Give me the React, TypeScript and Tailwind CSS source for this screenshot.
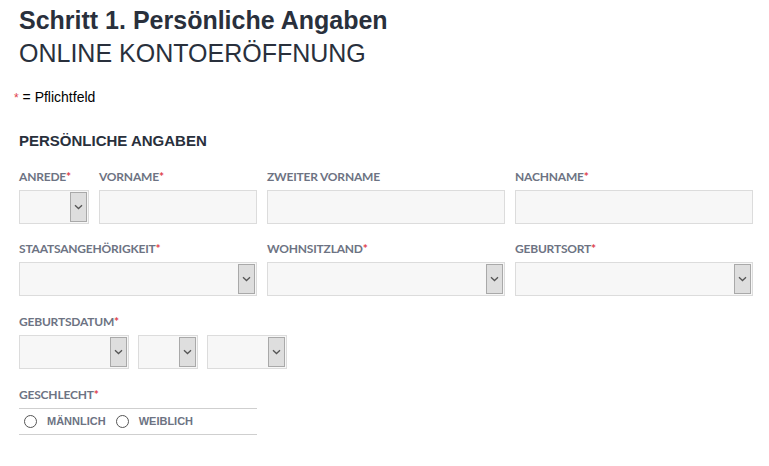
import React from "react";

const Chevron = () => (
  <svg width="9" height="6" viewBox="0 0 9 6" fill="none">
    <path d="M1 1.2 L4.5 4.5 L8 1.2" stroke="#555" strokeWidth="1.3" />
  </svg>
);

const Label = ({ text, req }: { text: string; req?: boolean }) => (
  <div className="h-[14px] text-[12px] leading-[14px] font-bold text-[#6d7383] tracking-[-0.2px] mb-[6px]" style={{ fontFamily: "Lato, sans-serif" }}>
    {text}
    {req && <span className="text-[#e0404a]">*</span>}
  </div>
);

const Input = ({ w }: { w: string }) => (
  <div className={`${w} h-[34px] bg-[#f7f7f7] border border-[#dcdcdc]`} />
);

const Select = ({ w }: { w: string }) => (
  <div className={`${w} h-[34px] bg-[#f7f7f7] border border-[#dcdcdc] flex justify-end p-px`}>
    <div className="w-[17px] h-full bg-[#dedede] border border-[#a9a9a9] flex items-center justify-center">
      <Chevron />
    </div>
  </div>
);

const Radio = ({ label }: { label: string }) => (
  <div className="flex items-center gap-[10px]">
    <div className="w-[13px] h-[13px] rounded-full border border-[#555] bg-white" />
    <span className="text-[11px] font-bold text-[#6d7383]">{label}</span>
  </div>
);

export default function App() {
  return (
    <div className="w-[769px] h-[466px] bg-white overflow-hidden" style={{ fontFamily: "'Liberation Sans', Arial, sans-serif" }}>
      <div className="pl-[19px] pt-[6px]">
        <h1 className="text-[25px] leading-[29px] font-bold text-[#29303c]">Schritt 1. Persönliche Angaben</h1>
        <h2 className="text-[25px] leading-[29px] text-[#29303c] mt-[4px]">ONLINE KONTOERÖFFNUNG</h2>
      </div>
      <div className="pl-[14px] mt-[21px] text-[14px] leading-[16px] text-black">
        <span className="text-[#e0404a] text-[12px]">*</span> = Pflichtfeld
      </div>
      <div className="pl-[19px] pr-[16px]">
        <h3 className="mt-[26px] text-[15px] leading-[18px] font-bold text-[#29303c]">PERSÖNLICHE ANGABEN</h3>

        <div className="flex gap-[10px] mt-[20px]">
          <div>
            <Label text="ANREDE" req />
            <Select w="w-[70px]" />
          </div>
          <div>
            <Label text="VORNAME" req />
            <Input w="w-[158px]" />
          </div>
          <div>
            <Label text="ZWEITER VORNAME" />
            <Input w="w-[238px]" />
          </div>
          <div>
            <Label text="NACHNAME" req />
            <Input w="w-[238px]" />
          </div>
        </div>

        <div className="flex gap-[10px] mt-[18px]">
          <div>
            <Label text="STAATSANGEHÖRIGKEIT" req />
            <Select w="w-[238px]" />
          </div>
          <div>
            <Label text="WOHNSITZLAND" req />
            <Select w="w-[238px]" />
          </div>
          <div>
            <Label text="GEBURTSORT" req />
            <Select w="w-[238px]" />
          </div>
        </div>

        <div className="mt-[19px]">
          <Label text="GEBURTSDATUM" req />
          <div className="flex gap-[9px]">
            <Select w="w-[110px]" />
            <Select w="w-[60px]" />
            <Select w="w-[80px]" />
          </div>
        </div>

        <div className="mt-[19px] w-[238px]">
          <Label text="GESCHLECHT" req />
          <div className="border-t border-b border-[#cfcfcf] h-[27px] flex items-center gap-[10px] pl-[5px] mt-[1px]">
            <Radio label="MÄNNLICH" />
            <Radio label="WEIBLICH" />
          </div>
        </div>
      </div>
    </div>
  );
}
